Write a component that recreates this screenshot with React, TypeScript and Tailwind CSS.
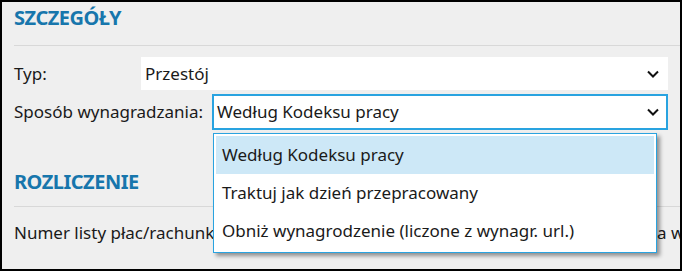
import React from "react";

function Chevron() {
  return (
    <svg width="12" height="8" viewBox="0 0 12 8" className="shrink-0">
      <path d="M1 1.5 L6 6.5 L11 1.5" fill="none" stroke="#111" strokeWidth="2" />
    </svg>
  );
}

export default function App() {
  const font = "font-['Noto_Sans',sans-serif]";
  return (
    <div className={`relative w-[682px] h-[271px] border-2 border-black bg-[#efefef] overflow-hidden text-[#1a1a1a] ${font}`}>
      <div className="pl-3 pt-[2px]">
        <div className="text-[20px] leading-[28px] font-bold tracking-[-0.5px] text-[#1776ac]">SZCZEGÓŁY</div>
        <div className="mt-[13px] h-px bg-[#d8d8d8]" />
        <div className="pr-[12px]">
          <div className="mt-[11px] flex items-center h-[33px] text-[17px] leading-[24px]">
            <div className="w-[127px]">Typ:</div>
            <div className="flex-1 h-full bg-white flex items-center pl-[4px] pr-[9px]">
              <span className="flex-1">Przestój</span>
              <Chevron />
            </div>
          </div>
          <div className="mt-[4px] flex items-center h-[36px] text-[17px] leading-[24px]">
            <div className="w-[198px]">Sposób wynagradzania:</div>
            <div className="flex-1 h-full bg-white border-2 border-[#29a3e0] flex items-center pl-[3px] pr-[7px]">
              <span className="flex-1">Według Kodeksu pracy</span>
              <Chevron />
            </div>
          </div>
        </div>
        <div className="mt-[38px] text-[20px] leading-[28px] font-bold tracking-[-0.5px] text-[#1776ac]">ROZLICZENIE</div>
        <div className="mt-[10px] h-px bg-[#d8d8d8]" />
        <div className="mt-[14px] flex text-[17px] leading-[24px] whitespace-nowrap">
          <span className="w-[643px] shrink-0 overflow-hidden">Numer listy płac/rachunku</span>
          <span>a wynagrodzenia</span>
        </div>
      </div>

      <div className="absolute left-[211px] top-[131px] w-[444px] bg-white border border-[#29a3e0] p-[2px] shadow-[3px_3px_4px_rgba(0,0,0,0.4)] text-[17px] leading-[24px]">
        <div className="h-[38px] flex items-center pl-[6px] bg-[#cde8f7]">Według Kodeksu pracy</div>
        <div className="h-[38px] flex items-center pl-[6px]">Traktuj jak dzień przepracowany</div>
        <div className="h-[38px] flex items-center pl-[6px]">Obniż wynagrodzenie (liczone z wynagr. url.)</div>
      </div>
    </div>
  );
}
